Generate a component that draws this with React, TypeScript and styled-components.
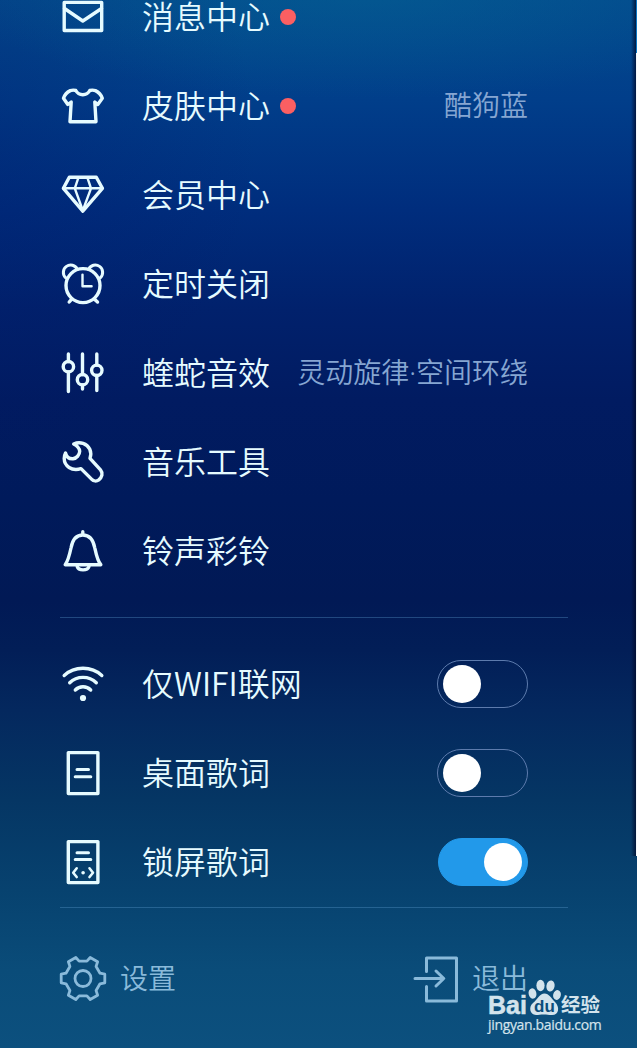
import React, { useState } from "react";
import styled, { createGlobalStyle } from "styled-components";

const GlobalStyle = createGlobalStyle`
  * { box-sizing: border-box; }
  body { margin: 0; background: #00174f; }
`;

const Screen = styled.main`
  position: relative;
  width: 637px;
  height: 1048px;
  overflow: hidden;
  display: flex;
  flex-direction: column;
  font-family: "Noto Sans CJK SC", sans-serif;
  font-weight: 350;
  color: #e6fbff;
  background:
    radial-gradient(ellipse 420px 110px at 370px -10px, rgba(4, 98, 146, 0.55), rgba(4, 98, 146, 0) 100%),
    radial-gradient(ellipse 300px 330px at -40px 140px, rgba(0, 20, 100, 0.28), rgba(0, 20, 100, 0) 100%),
    linear-gradient(180deg, #034a8e 0, #013e8a 100px, #002d7d 210px, #01216c 310px, #011b61 400px, #001a5b 500px, #011955 600px, #021e57 650px, #04285e 710px, #053664 800px, #07426f 890px, #0a4c79 970px, #0c507e 1048px);
`;

const Section = styled.section<{ $lift?: number }>`
  display: flex;
  flex-direction: column;
  margin-top: ${(p) => p.$lift ?? 0}px;
  padding: 0 109px 0 59px;
`;

const Row = styled.div`
  display: flex;
  align-items: center;
  height: 89px;
  flex: none;
`;

const Glyph = styled.svg`
  width: 49px;
  height: 49px;
  flex: none;
  fill: none;
  stroke: currentColor;
  stroke-width: 3.4;
  stroke-linecap: round;
  stroke-linejoin: round;
`;

const Label = styled.span`
  margin-left: 34px;
  padding-bottom: 5px;
  font-size: 32px;
  line-height: 48px;
  white-space: nowrap;
`;

const Dot = styled.i`
  width: 16px;
  height: 16px;
  margin: 0 0 2px 10px;
  border-radius: 50%;
  background: #fb5f62;
`;

const Value = styled.span`
  margin-left: auto;
  padding-bottom: 3px;
  font-family: "Noto Sans", "Noto Sans CJK SC", sans-serif;
  font-size: 28px;
  line-height: 42px;
  white-space: nowrap;
  color: #86a6d2;
`;

const Divider = styled.hr<{ $top: number; $bottom: number }>`
  flex: none;
  width: 508px;
  height: 1px;
  margin: ${(p) => p.$top}px 0 ${(p) => p.$bottom}px 60px;
  border: 0;
  background: rgba(100, 165, 215, 0.33);
`;

const Switch = styled.button<{ $on: boolean }>`
  display: flex;
  align-items: center;
  justify-content: ${(p) => (p.$on ? "flex-end" : "flex-start")};
  width: ${(p) => (p.$on ? 90 : 91)}px;
  height: 48px;
  margin: 0 0 2px auto;
  padding: 0 5px;
  border: 1px solid ${(p) => (p.$on ? "#2299ea" : "#5d7bad")};
  border-radius: 24px;
  background: ${(p) => (p.$on ? "#2299ea" : "transparent")};
`;

const Knob = styled.span`
  width: 38px;
  height: 38px;
  border-radius: 50%;
  background: #fff;
`;

const Footer = styled.footer`
  display: flex;
  align-items: center;
  justify-content: space-between;
  height: 50px;
  margin-top: 45px;
  padding: 0 109px 0 59px;
  color: #8abada;
`;

const Action = styled.div<{ $gap: number }>`
  display: flex;
  align-items: center;
  gap: ${(p) => p.$gap}px;
`;

const ActionLabel = styled.span`
  padding-bottom: 2px;
  font-size: 28px;
  line-height: 42px;
`;

const EdgeStrip = styled.div`
  position: absolute;
  top: 0;
  right: 0;
  width: 6px;
  height: 856px;
  background: linear-gradient(90deg, rgba(0, 8, 40, 0) 0, rgba(0, 8, 40, 0.75) 5px, transparent 5px),
    linear-gradient(180deg, #0a76c4 53px, #f4f8fb 53px) right / 1px 100% no-repeat;
`;

const Watermark = styled.div`
  position: absolute;
  left: 488px;
  top: 978px;
  width: 116px;
  display: flex;
  flex-direction: column;
  color: #d3e3ec;
`;

const Brand = styled.div`
  display: flex;
  align-items: flex-end;
  height: 38px;
  white-space: nowrap;
`;

const BrandLatin = styled.span`
  width: 39px;
  font: 700 25px/22px "Liberation Sans", Arial, sans-serif;
  -webkit-text-stroke: 0.5px currentColor;
`;

const BrandHan = styled.span`
  font: 700 19.5px/24px "Noto Sans CJK SC", sans-serif;
`;

const Paw = styled.svg`
  width: 34px;
  height: 38px;
  flex: none;
  fill: currentColor;
`;

const PawText = styled.text`
  font: 700 17px "Liberation Sans", Arial, sans-serif;
  fill: #0b4d7b;
`;

const Site = styled.span`
  font: 400 14px/18px "Open Sans", "Noto Sans", sans-serif;
  letter-spacing: -0.34px;
  -webkit-text-stroke: 0.2px currentColor;
`;

const icons = {
  mail: (
    <>
      <path d="M5.2 9.4H42.7V37.5H5.2Z" />
      <path d="M5.5 15.5L23.8 28L42.5 15.5" />
    </>
  ),
  shirt: (
    <path d="M11.3 8.6Q14 7.8 16.8 8.5Q19 12.6 23.8 12.7Q28.6 12.6 30.8 8.5Q33.6 7.8 36.4 8.6Q41.5 11 43.3 16.3L38.8 22.500L35.800 20L37 39.700H11L12.200 20L8.800 22.500L4.500 16.300Q6.200 11 11.300 8.600Z" />
  ),
  diamond: (
    <>
      <path d="M10.300 6.300H37.300L43.400 17.300L23.800 40.200L4.400 17.300Z" />
      <path d="M4.400 17.300H43.400M19.500 6.300L15.800 17.300L23.800 39.500L32 17.300L28.300 6.300" strokeWidth={2.4} />
    </>
  ),
  alarm: (
    <>
      <circle cx="24" cy="25.600" r="17" />
      <path d="M6.600 17.600A7.300 7.300 0 1 1 18.300 9.300M29.700 9.300A7.300 7.300 0 1 1 41.400 17.600" strokeWidth={3} />
      <path d="M12.500 39.300L10.200 42M35.500 39.300L38.500 42" />
      <path d="M23.500 14.600V26.200H32.600" strokeWidth={2.4} />
    </>
  ),
  sliders: (
    <>
      <circle cx="9.400" cy="17.700" r="5.200" />
      <circle cx="23.500" cy="30.700" r="5.200" />
      <circle cx="37.800" cy="21.300" r="5.200" />
      <path d="M9.400 5V12.500M9.400 23V42.500M23.500 5V25.500M23.500 36V40M37.800 5V16M37.800 26.500V41.500" />
    </>
  ),
  wrench: (
    <path d="M14.700 6C21 3.200 28 5.500 30.800 11.300C32.200 14.500 32 17.500 31 20.300L41.500 31.800C44.300 35.200 43 39.300 39.800 41.800C37.500 43.500 34.500 43.200 32.800 41.400L22 30.600C12.500 33.500 5.300 28 5.200 20.500C5.200 18.500 5.600 16.700 6.500 15C7.500 19 10.500 21 14 20.800C17.600 20.300 20.600 17 20.700 13.300C20.500 9.500 17.500 7.500 14.700 6Z" />
  ),
  bell: (
    <>
      <path d="M23.800 4.800V7.500M6.200 37.700H41.800C38.500 34 37.300 28 35.800 21C34.200 12.500 30 8 23.800 8C17.600 8 13.500 12.500 12 21C10.500 28 9 34 6.200 37.700Z" />
      <path d="M18.200 39.500C19.500 44 28.500 44 30 39.500" />
    </>
  ),
  wifi: (
    <>
      <path d="M5.200 15.500C15.500 5.900 32.500 5.900 42.800 15.500M10.700 22.800C18 15.600 30 15.600 37.300 22.800M16.300 30C20.500 25.700 27.500 25.700 31.700 30" />
      <circle cx="24" cy="38" r="3.100" fill="currentColor" stroke="none" />
    </>
  ),
  desktopLyrics: (
    <>
      <path d="M9.300 3.600H38.900V44.600H9.300Z" />
      <path d="M18 20.400H29.500M16.200 27.700H31.800" strokeWidth={3} />
    </>
  ),
  lockLyrics: (
    <>
      <path d="M9.300 3.600H38.900V44.600H9.300Z" />
      <path d="M18 14.700H29.500M16.200 21.400H31.800" strokeWidth={3} />
      <path d="M17.700 30.300L14.200 34.700L17.700 39M30.500 30.300L34 34.700L30.500 39" strokeWidth={2.6} />
      <circle cx="24.100" cy="34.700" r="1.800" fill="currentColor" stroke="none" />
    </>
  ),
};

const gearPath =
  [0, 60, 120, 180, 240, 300]
    .flatMap((deg) => {
      const a = (deg * Math.PI) / 180;
      return [
        [17, -5.3],
        [21.8, -4.3],
        [21.8, 4.3],
        [17, 5.3],
      ].map(([x, y]) => `${24 + x * Math.cos(a) - y * Math.sin(a)} ${24.5 + x * Math.sin(a) + y * Math.cos(a)}`);
    })
    .join("L");

type IconName = keyof typeof icons;

const menu: { icon: IconName; label: string; dot?: boolean; value?: string }[] = [
  { icon: "mail", label: "消息中心", dot: true },
  { icon: "shirt", label: "皮肤中心", dot: true, value: "酷狗蓝" },
  { icon: "diamond", label: "会员中心" },
  { icon: "alarm", label: "定时关闭" },
  { icon: "sliders", label: "蝰蛇音效", value: "灵动旋律·空间环绕" },
  { icon: "wrench", label: "音乐工具" },
  { icon: "bell", label: "铃声彩铃" },
];

const toggles: { icon: IconName; label: string; on: boolean }[] = [
  { icon: "wifi", label: "仅WIFI联网", on: false },
  { icon: "desktopLyrics", label: "桌面歌词", on: false },
  { icon: "lockLyrics", label: "锁屏歌词", on: true },
];

function ToggleRow({ icon, label, on }: { icon: IconName; label: string; on: boolean }) {
  const [active, setActive] = useState(on);
  return (
    <Row>
      <Glyph viewBox="0 0 49 49">{icons[icon]}</Glyph>
      <Label>{label}</Label>
      <Switch $on={active} role="switch" aria-checked={active} onClick={() => setActive(!active)}>
        <Knob />
      </Switch>
    </Row>
  );
}

export default function App() {
  return (
    <>
      <GlobalStyle />
      <Screen>
        <Section $lift={-27}>
          {menu.map((item) => (
            <Row key={item.label}>
              <Glyph viewBox="0 0 49 49">{icons[item.icon]}</Glyph>
              <Label>{item.label}</Label>
              {item.dot && <Dot />}
              {item.value && <Value>{item.value}</Value>}
            </Row>
          ))}
        </Section>
        <Divider $top={21} $bottom={22} />
        <Section>
          {toggles.map((item) => (
            <ToggleRow key={item.label} {...item} />
          ))}
        </Section>
        <Divider $top={0} $bottom={0} />
        <Footer>
          <Action $gap={12}>
            <Glyph viewBox="0 0 49 49">
              <path d={`M${gearPath}Z`} strokeWidth={2.8} />
              <circle cx="24" cy="24.500" r="8" strokeWidth={2.8} />
            </Glyph>
            <ActionLabel>设置</ActionLabel>
          </Action>
          <Action $gap={10}>
            <Glyph viewBox="0 0 49 49">
              <path d="M13.500 17.500V4H43.500V47H13.500V32.500M2 24.500H30.500M23 17L30.800 24.500L23 32" strokeWidth={3} />
            </Glyph>
            <ActionLabel>退出</ActionLabel>
          </Action>
        </Footer>
        <EdgeStrip />
        <Watermark>
          <Brand>
            <BrandLatin>Bai</BrandLatin>
            <Paw viewBox="0 0 34 38">
              <ellipse cx="5.500" cy="15.500" rx="3.900" ry="5.200" transform="rotate(-12 5.500 15.500)" />
              <ellipse cx="13.500" cy="7.500" rx="4.100" ry="5.700" />
              <ellipse cx="23.500" cy="8" rx="4.100" ry="5.500" transform="rotate(12 23.500 8)" />
              <ellipse cx="30" cy="17" rx="3.800" ry="5" transform="rotate(14 30 17)" />
              <path d="M17.500 15.500C22 15.500 24 20 28 24C33 29 32 37 25 37C21 37 20 36.500 17 36.500C13 36.500 12 37 9 37C2.500 36.500 1.500 28.500 6 25C11 21 12.500 15.500 17.500 15.500Z" />
              <PawText x="7" y="34">du</PawText>
            </Paw>
            <BrandHan>经验</BrandHan>
          </Brand>
          <Site>jingyan.baidu.com</Site>
        </Watermark>
      </Screen>
    </>
  );
}
